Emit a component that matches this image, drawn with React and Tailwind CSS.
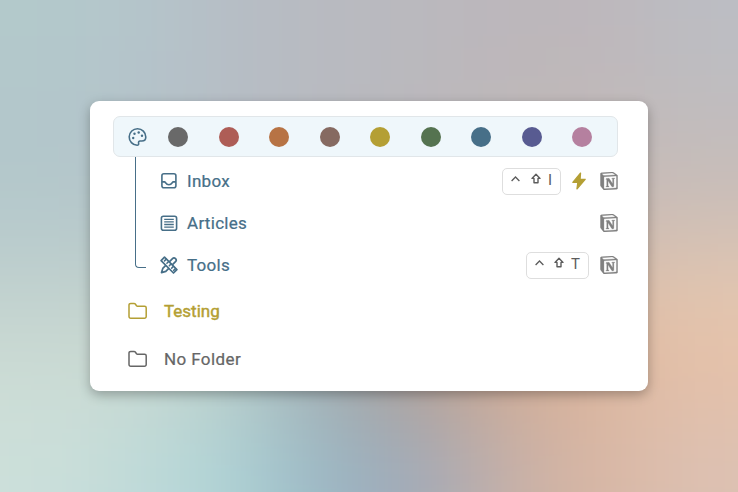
import { SiNotion } from "react-icons/si";

const mesh = [
  ["#b3c9cb", "#b4c5cb", "#b6bdc5", "#b8bac0", "#bab9be", "#bcb6bb", "#bdb7bb", "#bcbdc3"],
  ["#b2c6cb", "#b4c2ca", "#b6bdc5", "#b8bac0", "#bab8bc", "#bfb8b8", "#c1b9b8", "#c1bcbd"],
  ["#b4c8cb", "#b4c6ca", "#b6bdc5", "#b8bac0", "#bab8bc", "#bfb8b8", "#c6bbb7", "#cabdb7"],
  ["#c0d0ce", "#c0d0cc", "#b8c4c4", "#a8b0b8", "#b09f98", "#d0ac94", "#ddbfa9", "#e3c7b1"],
  ["#cddcd4", "#cddbd2", "#bccfca", "#a0acb2", "#b49d90", "#d2ab92", "#dcb69d", "#e6c0a7"],
  ["#ccdfda", "#bfdad9", "#aed3d6", "#9ab7c4", "#9fa9b9", "#c6b0a8", "#d9b6a3", "#dcc1b3"],
];
// Repeat the outer cells twice so that the blur has no bright rim.
const rows = [mesh[0], mesh[0], ...mesh, mesh[5], mesh[5]].map((r) => [r[0], r[0], ...r, r[7], r[7]]);

const swatches = ["#696969", "#ae5d56", "#b77344", "#866a61", "#b49f34", "#557350", "#476f88", "#585b91", "#b5809f"];

function PaletteIcon() {
  return (
    <svg className="size-[20px] text-[#476f88]" viewBox="0 0 20 20" fill="none" stroke="currentColor" strokeWidth="1.6" strokeLinejoin="round">
      <path d="M9.1 18.3a8.3 8.3 0 1 1 8.7-8.4c0 2.4-1.7 4.1-4 4.1h-1.7c-1.3 0-1.8.9-1.5 2.1.3 1.3-.2 2.2-1.5 2.2z" />
      <g fill="currentColor" stroke="none">
        <circle cx="5.2" cy="11" r="1.2" />
        <circle cx="6.5" cy="6.7" r="1.2" />
        <circle cx="10.7" cy="5.5" r="1.2" />
        <circle cx="14" cy="8.8" r="1.2" />
      </g>
    </svg>
  );
}

function InboxIcon() {
  return (
    <svg className="size-[20px]" viewBox="0 0 20 20" fill="none" stroke="currentColor" strokeWidth="1.6" strokeLinejoin="round">
      <rect x="1.9" y="1.8" width="14" height="14" rx="2" />
      <path d="M2.1 9.9h2.5c1 0 1.2 2.8 4.3 2.8s3.3-2.8 4.3-2.8h2.7" />
    </svg>
  );
}

function ArticlesIcon() {
  return (
    <svg className="size-[20px]" viewBox="0 0 20 20" fill="none" stroke="currentColor" strokeWidth="1.6">
      <rect x="1.4" y="2.2" width="15.2" height="14" rx="2" />
      <path strokeWidth="1.3" d="M4.2 5.3h9.6M4.2 7.9h9.6M4.2 10.5h9.6M4.2 13.1h9.6" />
    </svg>
  );
}

function ToolsIcon() {
  return (
    <svg className="size-[20px]" viewBox="0 0 20 20" fill="none" stroke="currentColor" strokeWidth="1.7" strokeLinecap="round" strokeLinejoin="round">
      <g transform="translate(-.7 -.6)">
        <path d="M2.2 17.2l1.3-4.2L13.2 3.3a2.1 2.1 0 0 1 3 3L6.5 16z" />
        <path fill="white" d="M1.8 5.2l3.4-3.4L17.6 14.2l-3.4 3.4z" />
        <path strokeWidth="1.5" d="M7 3.7L5.2 5.5M9.4 6.1L7.6 7.900M11.8 8.500L10 10.300M14.200 10.900l-1.800 1.800M16.200 13.200l-1.800 1.800" />
      </g>
    </svg>
  );
}

function FolderIcon() {
  return (
    <svg className="mb-[2px] size-[20px]" viewBox="0 0 20 20" fill="none" stroke="currentColor" strokeWidth="1.5" strokeLinejoin="round">
      <path d="M1 4.100a1.700 1.700 0 0 1 1.700-1.700h3.300c.6 0 1 .2 1.300.6l1.200 1.700c.2.300.5.500.9.500h7.200a1.600 1.600 0 0 1 1.600 1.600v8.700a1.700 1.700 0 0 1-1.700 1.700H2.700A1.700 1.700 0 0 1 1 15.500z" />
    </svg>
  );
}

function BoltIcon() {
  return (
    <svg className="mr-[3px] mb-[2px] ml-[11px] h-[18px] w-[14px] text-[#b49f34]" viewBox="0 0 14 18" fill="currentColor" stroke="currentColor" strokeWidth="1.2" strokeLinejoin="round">
      <path d="M8.600 1L.8 10.400h5L4.900 17l8.300-9.700H8.100z" />
    </svg>
  );
}

function Shortcut({ letter }) {
  return (
    <span className="mb-[2px] flex h-[27px] items-center rounded-[5px] border border-[#dedede] pr-[8px] pl-2 text-[15px] leading-none text-[#5c5c5c]">
      <svg className="mb-[5px] h-[8px] w-[9px]" viewBox="0 0 9 8" fill="none" stroke="currentColor" strokeWidth="1.3">
        <path d="M.6 6l3.900-4 3.900 4" />
      </svg>
      <svg className="mb-[5px] ml-[10.5px] h-[11px] w-[10px]" viewBox="0 0 10 11" fill="none" stroke="currentColor" strokeWidth="1.4" strokeLinejoin="round">
        <path d="M5 1.200l4 4.200H7V9.800H3V5.400H1z" />
      </svg>
      <span className="mb-px ml-[7px]">{letter}</span>
    </span>
  );
}

function Item({ icon: Icon, label, letter, bolt }) {
  return (
    <div className="flex h-[42px] items-center text-[#476f88]">
      <Icon />
      <span className="ml-[7px] text-[17px] tracking-[0.3px] [-webkit-text-stroke:0.22px]">{label}</span>
      <div className="ml-auto flex items-center">
        {letter && <Shortcut letter={letter} />}
        {bolt && <BoltIcon />}
        <SiNotion className="mb-[2px] ml-[11px] size-[18px] stroke-[#808080] stroke-[0.4px] text-[#808080]" />
      </div>
    </div>
  );
}

export default function App() {
  return (
    <div className="relative h-[492px] w-[738px] overflow-hidden font-['Roboto',sans-serif]">
      <div className="absolute -inset-x-[184px] -inset-y-[164px] grid grid-cols-12 grid-rows-10 blur-[50px]">
        {rows.flat().map((c, i) => (
          <div key={i} style={{ backgroundColor: c }} />
        ))}
      </div>
      <div className="relative flex h-full items-center justify-center">
        <main className="h-[290px] w-[558px] rounded-[9px] bg-white pt-[15px] pr-[30px] pl-[23px] shadow-[0_4px_12px_rgba(0,0,0,0.28)]">
          <div className="flex h-[41px] items-center rounded-[7px] border border-[#e1e6e9] bg-[#eff7fb] pr-[25px] pl-[14px]">
            <PaletteIcon />
            <div className="ml-[20px] flex flex-1 justify-between">
              {swatches.map((c) => (
                <span key={c} className="size-[20px] rounded-full" style={{ backgroundColor: c }} />
              ))}
            </div>
          </div>
          <div className="flex">
            <div className="ml-[22px] h-[111px] w-[11px] rounded-bl-[4px] border-b border-l border-[#476f88]" />
            <div className="ml-[14px] flex-1 pt-[4px]">
              <Item icon={InboxIcon} label="Inbox" letter="I" bolt />
              <Item icon={ArticlesIcon} label="Articles" />
              <Item icon={ToolsIcon} label="Tools" letter="T" />
            </div>
          </div>
          <div className="flex h-[48px] items-center pt-[2px] pl-[15px] text-[#b49f34]">
            <FolderIcon />
            <span className="ml-[16px] text-[17px] [-webkit-text-stroke:0.45px]">Testing</span>
          </div>
          <div className="flex h-[48px] items-center pt-[2px] pl-[15px] text-[#666]">
            <FolderIcon />
            <span className="ml-[16px] text-[17px] tracking-[0.4px] [-webkit-text-stroke:0.22px]">No Folder</span>
          </div>
        </main>
      </div>
    </div>
  );
}
